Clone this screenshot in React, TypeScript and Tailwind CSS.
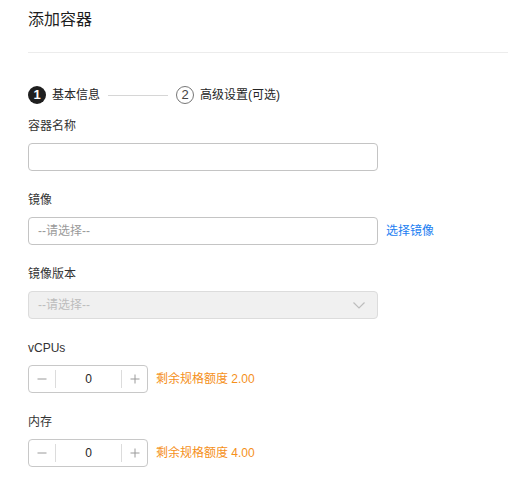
import React from "react";

const FONT = { fontFamily: '"Liberation Sans", "Noto Sans CJK SC", sans-serif' };

function Label({ children }: { children: React.ReactNode }) {
  return <div className="h-[18px] text-[12px] leading-[18px] text-[#333]">{children}</div>;
}

function Stepper({ hint }: { hint: string }) {
  return (
    <div className="mt-[8px] flex items-center">
      <div className="flex h-[28px] w-[120px] items-center rounded-[4px] border border-[#c8c8c8] bg-white">
        <div className="flex h-full w-[26px] items-center justify-center">
          <svg width="10" height="10" viewBox="0 0 10 10">
            <line x1="0.5" y1="5" x2="9.5" y2="5" stroke="#9a9a9a" strokeWidth="1" />
          </svg>
        </div>
        <div className="h-[18px] w-px bg-[#dcdcdc]" />
        <div className="flex-1 text-center text-[12px] text-[#252525]">0</div>
        <div className="h-[18px] w-px bg-[#dcdcdc]" />
        <div className="flex h-full w-[25px] items-center justify-center">
          <svg width="10" height="10" viewBox="0 0 10 10">
            <line x1="0.5" y1="5" x2="9.5" y2="5" stroke="#9a9a9a" strokeWidth="1" />
            <line x1="5" y1="0.5" x2="5" y2="9.5" stroke="#9a9a9a" strokeWidth="1" />
          </svg>
        </div>
      </div>
      <span className="ml-[8px] text-[12px] text-[#f5901a]">{hint}</span>
    </div>
  );
}

export default function App() {
  return (
    <div className="h-[488px] w-[508px] bg-white pl-[28px]" style={FONT}>
      <div className="h-[52px] pt-[8px] text-[16px] leading-[24px] text-[#1f1f1f]">添加容器</div>
      <div className="h-px bg-[#ececec]" />

      <div className="mt-[32px] flex h-[20px] items-center text-[12px] text-[#252525]">
        <div className="flex h-[18px] w-[18px] items-center justify-center rounded-full bg-[#1f1f1f] text-[13px] font-bold text-white">
          1
        </div>
        <span className="ml-[6px]">基本信息</span>
        <div className="ml-[8px] h-px w-[60px] bg-[#d6d6d6]" />
        <div className="ml-[8px] flex h-[18px] w-[18px] items-center justify-center rounded-full border border-[#777] text-[13px] text-[#444]">
          2
        </div>
        <span className="ml-[6px]">高级设置(可选)</span>
      </div>

      <div className="mt-[12px]">
        <Label>容器名称</Label>
        <div className="mt-[8px] h-[28px] w-[350px] rounded-[4px] border border-[#c4c4c4] bg-white" />
      </div>

      <div className="mt-[20px]">
        <Label>镜像</Label>
        <div className="mt-[8px] flex items-center">
          <div className="flex h-[28px] w-[350px] items-center rounded-[4px] border border-[#c4c4c4] bg-white pl-[9px] text-[12px] text-[#9a9a9a]">
            --请选择--
          </div>
          <span className="ml-[8px] text-[12px] text-[#1b7ef2]">选择镜像</span>
        </div>
      </div>

      <div className="mt-[20px]">
        <Label>镜像版本</Label>
        <div className="mt-[8px] flex h-[28px] w-[350px] items-center justify-between rounded-[4px] border border-[#dcdcdc] bg-[#f0f0f0] pl-[9px] pr-[12px] text-[12px] text-[#bdbdbd]">
          <span>--请选择--</span>
          <svg width="12" height="7" viewBox="0 0 12 7">
            <polyline points="0.5,0.5 6,6 11.5,0.5" fill="none" stroke="#bdbdbd" strokeWidth="1.2" />
          </svg>
        </div>
      </div>

      <div className="mt-[20px]">
        <Label>vCPUs</Label>
        <Stepper hint="剩余规格额度 2.00" />
      </div>

      <div className="mt-[20px]">
        <Label>内存</Label>
        <Stepper hint="剩余规格额度 4.00" />
      </div>
    </div>
  );
}
